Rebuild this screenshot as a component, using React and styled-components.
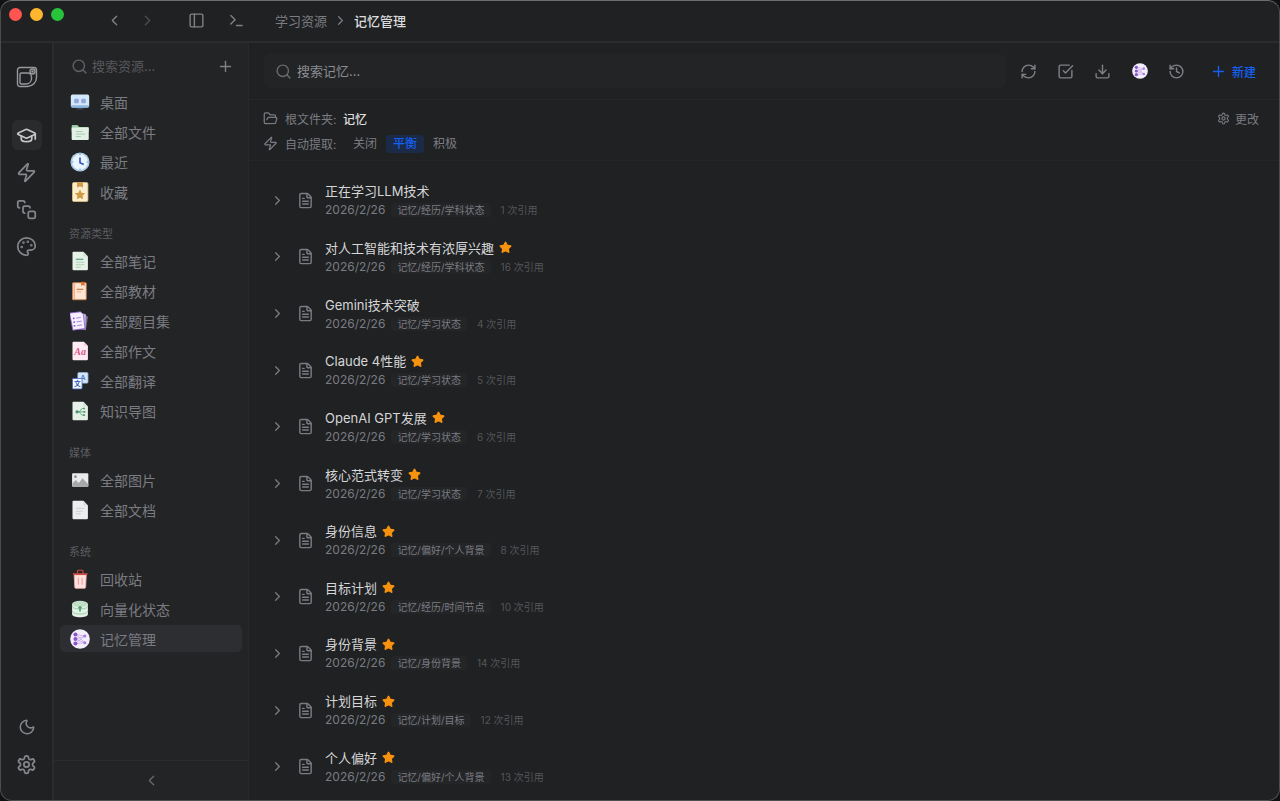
import React from 'react';
import styled, { createGlobalStyle, css } from 'styled-components';
import {
  ChevronLeft,
  ChevronRight,
  Download,
  FileText,
  FolderOpen,
  GraduationCap,
  History,
  Moon,
  Palette,
  PanelLeft,
  Plus,
  RefreshCw,
  Search,
  SquareCheckBig,
  SquareStack,
  Star,
  Terminal,
  Zap,
} from 'lucide-react';

const fileGroups = [
  {
    items: [
      { icon: 'desktop', label: '桌面' },
      { icon: 'folder', label: '全部文件' },
      { icon: 'clock', label: '最近' },
      { icon: 'favorite', label: '收藏' },
    ],
  },
  {
    title: '资源类型',
    items: [
      { icon: 'note', label: '全部笔记' },
      { icon: 'book', label: '全部教材' },
      { icon: 'exam', label: '全部题目集' },
      { icon: 'essay', label: '全部作文' },
      { icon: 'translate', label: '全部翻译' },
      { icon: 'mindmap', label: '知识导图' },
    ],
  },
  {
    title: '媒体',
    items: [
      { icon: 'image', label: '全部图片' },
      { icon: 'document', label: '全部文档' },
    ],
  },
  {
    title: '系统',
    items: [
      { icon: 'trash', label: '回收站' },
      { icon: 'vector', label: '向量化状态' },
      { icon: 'memory', label: '记忆管理', active: true },
    ],
  },
];

const memories = [
  { title: '正在学习LLM技术', path: '记忆/经历/学科状态', count: 1 },
  { title: '对人工智能和技术有浓厚兴趣', path: '记忆/经历/学科状态', count: 16, starred: true },
  { title: 'Gemini技术突破', path: '记忆/学习状态', count: 4 },
  { title: 'Claude 4性能', path: '记忆/学习状态', count: 5, starred: true },
  { title: 'OpenAI GPT发展', path: '记忆/学习状态', count: 6, starred: true },
  { title: '核心范式转变', path: '记忆/学习状态', count: 7, starred: true },
  { title: '身份信息', path: '记忆/偏好/个人背景', count: 8, starred: true },
  { title: '目标计划', path: '记忆/经历/时间节点', count: 10, starred: true },
  { title: '身份背景', path: '记忆/身份背景', count: 14, starred: true },
  { title: '计划目标', path: '记忆/计划/目标', count: 12, starred: true },
  { title: '个人偏好', path: '记忆/偏好/个人背景', count: 13, starred: true },
];

/* 24x24 drawings for the resource list */
const drawings = {
  desktop: (
    <>
      <path d="M8 19h8v2H8z" fill="#3b4450" />
      <rect x="1" y="3" width="22" height="15.5" rx="2" fill="#d3e7f8" />
      <path d="M1 16h22v.8a2 2 0 0 1-2 2H3a2 2 0 0 1-2-2z" fill="#8fb6dc" />
      <rect x="5" y="8" width="5.5" height="5.5" rx="1.2" fill="#8fa9dd" />
      <rect x="13.5" y="8" width="5.5" height="5.5" rx="1.2" fill="#8fa9dd" />
    </>
  ),
  folder: (
    <>
      <path d="M2 5a1.5 1.5 0 0 1 1.5-1.500H9L11 6h10.500A1 1 0 0 1 22.500 7v5H2z" fill="#9cc5a3" />
      <rect x="2" y="6.5" width="20.5" height="15" rx="1.2" fill="#e3f1e5" />
      <path d="M7 11.500h8M7 14.500h11M7 17.500h6" stroke="#a3cdb0" strokeWidth="1.2" />
    </>
  ),
  clock: (
    <>
      <circle cx="12" cy="12" r="11.5" fill="#a9cbe9" />
      <circle cx="12" cy="12" r="9.5" fill="#eaf4fd" />
      <path d="M12 2v2M12 20v2M2 12h2M20 12h2" stroke="#5a86c4" strokeWidth="1" />
      <path d="M12 6.500V13l4.500 2" fill="none" stroke="#2d55c8" strokeWidth="2" />
    </>
  ),
  favorite: (
    <>
      <rect x="3" y="0.5" width="18.5" height="23" rx="1.8" fill="#fbedcf" stroke="#e6c07c" />
      <path d="M8.500 0.500h7V7L12 5l-3.500 2z" fill="#d39a45" />
      <path d="m12 9 1.900 3.900 4.300.6-3.100 3 .7 4.300-3.800-2-3.800 2 .7-4.300-3.100-3 4.300-.6z" fill="#d39a45" />
    </>
  ),
  note: (
    <>
      <path d="M3 2a1 1 0 0 1 1-1h12l5.500 5.500V22a1 1 0 0 1-1 1H4a1 1 0 0 1-1-1z" fill="#e6f1e7" />
      <path d="M16 1v5.500h5.500z" fill="#cfe3d3" />
      <path d="M7 10h9" stroke="#70b18d" strokeWidth="1.8" />
      <path d="M7 13.500h10.500M7 16.500h10.500M7 19.500h6" stroke="#add2ba" strokeWidth="1.2" />
    </>
  ),
  book: (
    <>
      <rect x="3" y="2" width="16.5" height="20.5" rx="1" fill="#fce5d2" stroke="#cb7d49" />
      <path d="M5 2v20" stroke="#d98a58" strokeWidth="1" />
      <path d="M13.500 1h4v5l-2-1.300-2 1.300z" fill="#d86f2b" />
      <path d="M8 10h8" stroke="#c9794a" strokeWidth="1.4" />
      <path d="M8 13h5.500" stroke="#dfa989" strokeWidth="1" />
    </>
  ),
  exam: (
    <>
      <path d="m15 3 6.500 4-2.500 16-8-1z" fill="#7f7290" />
      <path d="m12 2 7 2-.5 18-8-.5z" fill="#c6b2e6" />
      <path d="m-.5 2.500 13-1.500L16 4l2 17-14.500 2z" fill="#f5effe" stroke="#8e61cf" />
      <path d="m3.500 9 2-.3M4 13.500l2-.3M4.500 18l2-.3" stroke="#8558c9" strokeWidth="2" />
      <path d="m7.500 8.500 5.500-.8M8 13l6-.8M8.500 17.500l6-.8" stroke="#a98bd8" strokeWidth="1.2" />
    </>
  ),
  essay: (
    <>
      <path d="M3 2a1 1 0 0 1 1-1h12.500L21.500 6v16a1 1 0 0 1-1 1H4a1 1 0 0 1-1-1z" fill="#fdebf1" />
      <path d="M16.500 1v5h5z" fill="#f6d3df" />
      <text
        x="12.2"
        y="17"
        textAnchor="middle"
        fontFamily="Liberation Serif, serif"
        fontSize="12"
        fontStyle="italic"
        fontWeight="700"
        fill="#d9578a"
      >
        Aa
      </text>
    </>
  ),
  translate: (
    <>
      <rect x="9.5" y="2" width="12" height="12.5" rx="1" fill="#d4e6fa" stroke="#a9c8ea" />
      <text x="15.5" y="11" textAnchor="middle" fontFamily="Liberation Sans, sans-serif" fontSize="9" fontWeight="700" fill="#4f7fc9">
        A
      </text>
      <rect x="3" y="9" width="11.5" height="12.5" rx="1" fill="#f5f8ff" stroke="#4168c4" />
      <text x="8.8" y="18.5" textAnchor="middle" fontFamily="Noto Sans CJK SC, sans-serif" fontSize="8" fontWeight="700" fill="#2c56b5">
        文
      </text>
    </>
  ),
  mindmap: (
    <>
      <path d="M3 2a1 1 0 0 1 1-1h12l5.500 5.500V22a1 1 0 0 1-1 1H4a1 1 0 0 1-1-1z" fill="#e6f1e7" />
      <path d="M16 1v5.500h5.500z" fill="#cfe3d3" />
      <path d="M8 13h9M16.500 9h-1.500c-2.500 0-2 4-4.500 4 2.500 0 2 4 4.500 4h1.500" fill="none" stroke="#5aa27a" strokeWidth="1" />
      <circle cx="8.5" cy="13" r="1.9" fill="#40936a" />
      <path d="M15.500 8h2.500v2h-2.500zM16 12h2.500v2H16zM15.500 16h2.500v2h-2.500z" fill="#5aa27a" />
    </>
  ),
  image: (
    <>
      <rect x="2.5" y="4" width="19.5" height="16" rx="1.2" fill="#ecebeb" />
      <circle cx="6.5" cy="8" r="1.6" fill="#8d8d8d" />
      <path d="M3 19v-3l4-4 3.500 3.500L15 10l7 7v2a1 1 0 0 1-1 1H4a1 1 0 0 1-1-1z" fill="#a8a8a8" />
    </>
  ),
  document: (
    <>
      <path d="M3 2a1 1 0 0 1 1-1h12l5.500 5.500V22a1 1 0 0 1-1 1H4a1 1 0 0 1-1-1z" fill="#efeeee" />
      <path d="M16 1v5.500h5.500z" fill="#dcdcdc" />
      <path d="M7 10h10.500M7 13.500h8M7 16.500h6" stroke="#cdcdcd" strokeWidth="1.1" />
    </>
  ),
  trash: (
    <>
      <path d="M9 5V2.500a1 1 0 0 1 1-1h4.500a1 1 0 0 1 1 1V5" fill="none" stroke="#cf4640" strokeWidth="1.4" />
      <path d="M5 7h14.500l-.7 15a1.300 1.300 0 0 1-1.300 1.200H7A1.300 1.300 0 0 1 5.700 22z" fill="#fde2df" stroke="#f0aaa5" />
      <path d="M3.500 6h17.500" stroke="#cf4640" strokeWidth="2" />
      <path d="M10 10.500v8.500M14.500 10.500v8.500" stroke="#eb9e98" strokeWidth="1.3" />
    </>
  ),
  vector: (
    <>
      <path d="M2.500 6v12c0 2.500 4.300 4 9.500 4s9.500-1.500 9.500-4V6z" fill="#e2f2e5" />
      <path d="M2.500 14c1 3 4 4 9.500 4s8.500-1 9.500-4M2.500 8.500c1 2.500 4 3.500 9.500 3.500s8.500-1 9.500-3.500" fill="none" stroke="#92c5a3" />
      <ellipse cx="12" cy="6" rx="9.5" ry="3.8" fill="#bfdfc7" />
      <path d="m12 8-3 3.200h2V15h2v-3.800h2z" fill="#52a072" />
    </>
  ),
  memory: (
    <>
      <circle cx="12" cy="12" r="11.8" fill="#f3edfc" />
      <path d="M6.500 6.500 17.500 8.500M6.500 6.500l11 9.500M6.500 12l11-3.500M6.500 12l11 4.500M6.500 17.500l11-9M6.500 17.500l11-1" stroke="#bd9fe6" strokeWidth=".8" />
      <circle cx="6.5" cy="6.5" r="2.4" fill="#8b57d0" />
      <circle cx="6.5" cy="12" r="2.4" fill="#8b57d0" />
      <circle cx="6.5" cy="17.5" r="2.4" fill="#8b57d0" />
      <circle cx="17.8" cy="8.3" r="1.8" fill="#a57be0" />
      <circle cx="17.8" cy="16.5" r="1.8" fill="#a57be0" />
    </>
  ),
};

const Drawing = ({ name, size = 20 }) => (
  <svg width={size} height={size} viewBox="0 0 24 24" aria-hidden="true">
    {drawings[name]}
  </svg>
);

const Logo = () => (
  <svg width="22" height="22" viewBox="0 0 22 22" fill="none" stroke="currentColor" strokeWidth="1.4" aria-hidden="true">
    <path d="M4 1.500h14a2.500 2.500 0 0 1 2.500 2.500v7.500a9 9 0 0 1-9 9H4A2.500 2.500 0 0 1 1.500 18V4A2.500 2.500 0 0 1 4 1.500z" />
    <path d="M5.500 7h6a4 4 0 0 1 4 4v2a5.500 5.500 0 0 1-5.500 5H5.500A1.500 1.500 0 0 1 4 16.500v-8A1.500 1.500 0 0 1 5.500 7z" />
    <circle cx="16.5" cy="5.5" r="2.5" />
    <circle cx="16.5" cy="5.5" r=".6" />
  </svg>
);

const Gear = ({ size }) => (
  <svg
    width={size}
    height={size}
    viewBox="0 0 24 24"
    fill="none"
    stroke="currentColor"
    strokeWidth="2"
    strokeLinecap="round"
    strokeLinejoin="round"
    aria-hidden="true"
  >
    <path d="M12.22 2h-.44a2 2 0 0 0-2 2v.18a2 2 0 0 1-1 1.73l-.43.25a2 2 0 0 1-2 0l-.15-.08a2 2 0 0 0-2.73.73l-.22.38a2 2 0 0 0 .73 2.73l.15.1a2 2 0 0 1 1 1.72v.51a2 2 0 0 1-1 1.74l-.15.09a2 2 0 0 0-.73 2.73l.22.38a2 2 0 0 0 2.73.73l.15-.08a2 2 0 0 1 2 0l.43.25a2 2 0 0 1 1 1.73V20a2 2 0 0 0 2 2h.44a2 2 0 0 0 2-2v-.18a2 2 0 0 1 1-1.73l.43-.25a2 2 0 0 1 2 0l.15.08a2 2 0 0 0 2.73-.73l.22-.39a2 2 0 0 0-.73-2.73l-.15-.08a2 2 0 0 1-1-1.74v-.5a2 2 0 0 1 1-1.74l.15-.09a2 2 0 0 0 .73-2.73l-.22-.38a2 2 0 0 0-2.73-.73l-.15.08a2 2 0 0 1-2 0l-.43-.25a2 2 0 0 1-1-1.73V4a2 2 0 0 0-2-2z" />
    <circle cx="12" cy="12" r="3" />
  </svg>
);

export default function App() {
  return (
    <>
      <GlobalStyle />
      <Window>
        <TitleBar>
          <TrafficLights>
            <Light color="#ff5550" />
            <Light color="#ffb52e" />
            <Light color="#27c43b" />
          </TrafficLights>
          <TitleTools>
            <IconButton aria-label="后退">
              <ChevronLeft size={17} />
            </IconButton>
            <IconButton aria-label="前进" $dim>
              <ChevronRight size={17} />
            </IconButton>
            <IconButton aria-label="侧边栏" $spaced>
              <PanelLeft size={17} />
            </IconButton>
            <IconButton aria-label="终端">
              <Terminal size={17} />
            </IconButton>
          </TitleTools>
          <Breadcrumb>
            <a href="#resources">学习资源</a>
            <ChevronRight size={15} />
            <strong>记忆管理</strong>
          </Breadcrumb>
        </TitleBar>

        <Body>
          <Rail>
            <LogoBox>
              <Logo />
            </LogoBox>
            <RailButton aria-label="学习资源" $active>
              <GraduationCap size={21} />
            </RailButton>
            <RailButton aria-label="快捷">
              <Zap size={21} />
            </RailButton>
            <RailButton aria-label="模板">
              <SquareStack size={21} />
            </RailButton>
            <RailButton aria-label="主题">
              <Palette size={21} />
            </RailButton>
            <RailBottom>
              <RailButton aria-label="深色模式">
                <Moon size={18} />
              </RailButton>
              <RailButton aria-label="设置">
                <Gear size={21} />
              </RailButton>
            </RailBottom>
          </Rail>

          <Sidebar>
            <SidebarSearch>
              <Search size={17} />
              <SidebarInput type="search" aria-label="搜索资源" placeholder="搜索资源..." />
              <IconButton aria-label="添加">
                <Plus size={17} />
              </IconButton>
            </SidebarSearch>
            <Groups>
              {fileGroups.map((group, i) => (
                <Group key={i}>
                  {group.title && <GroupTitle>{group.title}</GroupTitle>}
                  {group.items.map(({ icon, label, active }) => (
                    <SidebarItem key={label} $active={active}>
                      <Drawing name={icon} />
                      {label}
                    </SidebarItem>
                  ))}
                </Group>
              ))}
            </Groups>
            <Collapse aria-label="收起">
              <ChevronLeft size={17} />
            </Collapse>
          </Sidebar>

          <Main>
            <Toolbar>
              <SearchBox>
                <Search size={17} />
                <SearchInput type="search" aria-label="搜索记忆" placeholder="搜索记忆..." />
              </SearchBox>
              <Actions>
                <IconButton aria-label="刷新">
                  <RefreshCw size={17} />
                </IconButton>
                <IconButton aria-label="多选">
                  <SquareCheckBig size={17} />
                </IconButton>
                <IconButton aria-label="导出">
                  <Download size={17} />
                </IconButton>
                <IconButton aria-label="记忆">
                  <Drawing name="memory" size={16} />
                </IconButton>
                <IconButton aria-label="历史">
                  <History size={17} />
                </IconButton>
              </Actions>
              <CreateButton>
                <Plus size={17} />
                新建
              </CreateButton>
            </Toolbar>

            <Options>
              <OptionRow>
                <FolderOpen size={15} />
                <OptionLabel>根文件夹:</OptionLabel>
                <strong>记忆</strong>
                <ChangeButton>
                  <Gear size={13} />
                  更改
                </ChangeButton>
              </OptionRow>
              <OptionRow>
                <Zap size={15} />
                <OptionLabel>自动提取:</OptionLabel>
                <Modes>
                  <ModeButton>关闭</ModeButton>
                  <ModeButton $active>平衡</ModeButton>
                  <ModeButton>积极</ModeButton>
                </Modes>
              </OptionRow>
            </Options>

            <List>
              {memories.map((memory) => (
                <MemoryRow key={memory.title}>
                  <ExpandButton aria-label="展开">
                    <ChevronRight size={15} />
                  </ExpandButton>
                  <FileText size={17} />
                  <MemoryText>
                    <MemoryTitle>
                      {memory.title}
                      {memory.starred && <Star size={13} fill="currentColor" />}
                    </MemoryTitle>
                    <MemoryMeta>
                      <span>2026/2/26</span>
                      <Tag>{memory.path}</Tag>
                      <Count>{memory.count} 次引用</Count>
                    </MemoryMeta>
                  </MemoryText>
                </MemoryRow>
              ))}
            </List>
          </Main>
        </Body>
      </Window>
    </>
  );
}

const GlobalStyle = createGlobalStyle`
  * {
    box-sizing: border-box;
  }

  body {
    margin: 0;
    background: #101112;
    color: #7b7c83;
    font-family: Inter, 'Noto Sans CJK SC', sans-serif;
    font-size: 12px;
  }

  button, input {
    padding: 0;
    border: 0;
    background: none;
    color: inherit;
    font: inherit;
  }

  svg {
    flex: none;
  }
`;

const Window = styled.div`
  display: flex;
  flex-direction: column;
  height: 100vh;
  overflow: hidden;
  border: 1px solid #4b4d4e;
  border-top-color: #6b6d6e;
  border-radius: 12px;
  background: #1f2122;
`;

const TitleBar = styled.header`
  display: flex;
  flex: none;
  height: 42px;
  padding-bottom: 2px;
  border-bottom: 2px solid #2b2c2e;
`;

const TrafficLights = styled.div`
  display: flex;
  gap: 8px;
  width: 99px;
  padding: 7px 0 0 8px;
`;

const Light = styled.span`
  width: 13px;
  height: 13px;
  border-radius: 50%;
  background: ${(props) => props.color};
`;

const IconButton = styled.button`
  display: flex;
  align-items: center;
  justify-content: center;
  width: 28px;
  height: 28px;
  margin-left: ${(props) => (props.$spaced ? '16px' : '0')};
  color: ${(props) => (props.$dim ? '#4c4d50' : '#7f8085')};
`;

const TitleTools = styled.div`
  display: flex;
  align-items: center;
  gap: 5px;

  button + button + button {
    margin-right: 7px;
  }
`;

const Breadcrumb = styled.nav`
  display: flex;
  align-items: center;
  gap: 6px;
  margin-left: 18px;
  font-size: 13px;

  a {
    color: #7b7c83;
    text-decoration: none;
  }

  strong {
    color: #dddddf;
    font-weight: 500;
  }
`;

const Body = styled.div`
  display: flex;
  flex: 1;
  min-height: 0;
`;

const Rail = styled.nav`
  display: flex;
  flex-direction: column;
  align-items: center;
  gap: 7px;
  width: 53px;
  padding: 18px 0 21px;
  border-right: 2px solid #2b2c2e;
`;

const LogoBox = styled.div`
  display: flex;
  align-items: center;
  height: 32px;
  margin-bottom: 20px;
  color: #97989c;
`;

const RailButton = styled.button`
  display: flex;
  align-items: center;
  justify-content: center;
  width: 30px;
  height: 30px;
  border-radius: 6px;
  color: #85868c;

  ${(props) =>
    props.$active &&
    css`
      background: #2a2b2d;
      color: #c6c6c8;
    `}
`;

const RailBottom = styled.div`
  display: flex;
  flex-direction: column;
  gap: 7px;
  margin-top: auto;
`;

const Sidebar = styled.aside`
  display: flex;
  flex-direction: column;
  width: 195px;
  border-right: 1px solid #28292b;
  background: #232425;
`;

const SidebarSearch = styled.div`
  display: flex;
  align-items: center;
  gap: 4px;
  height: 45px;
  padding: 1px 9px 0 17px;
  color: #606167;
`;

const SidebarInput = styled.input`
  flex: 1;
  min-width: 0;
  font-size: 13px;
  outline: none;

  &::placeholder {
    color: #57585d;
  }
`;

const Groups = styled.div`
  flex: 1;
  padding: 0 6px;
`;

const Group = styled.div`
  display: flex;
  flex-direction: column;
  gap: 3px;
  margin-bottom: 20px;
`;

const GroupTitle = styled.h2`
  margin: 0;
  padding: 0 9px;
  color: #5c5d62;
  font-size: 11px;
  font-weight: 400;
  line-height: 19px;
`;

const SidebarItem = styled.button`
  display: flex;
  align-items: center;
  gap: 10px;
  height: 27px;
  padding: 0 10px;
  border-radius: 5px;
  background: ${(props) => (props.$active ? '#2d2e31' : 'transparent')};
  font-size: 14px;
`;

const Collapse = styled.button`
  display: flex;
  align-items: center;
  justify-content: center;
  height: 40px;
  border-top: 1px solid #2b2c2e;
  color: #67686c;
`;

const Main = styled.main`
  display: flex;
  flex: 1;
  flex-direction: column;
  min-width: 0;
`;

const Toolbar = styled.div`
  display: flex;
  align-items: center;
  height: 57px;
  padding: 0 23px 0 15px;
  border-bottom: 1px solid #252628;
`;

const SearchBox = styled.div`
  display: flex;
  flex: 1;
  align-items: center;
  gap: 5px;
  height: 34px;
  padding: 0 11px;
  border-radius: 6px;
  background: #232425;
  color: #68696d;
`;

const SearchInput = styled.input`
  flex: 1;
  min-width: 0;
  font-size: 13px;
  outline: none;

  &::placeholder {
    color: #8a8d94;
  }
`;

const Actions = styled.div`
  display: flex;
  gap: 9px;
  margin: 0 19px 0 9px;
`;

const CreateButton = styled.button`
  display: flex;
  align-items: center;
  gap: 5px;
  color: #1560f0;
  font-weight: 500;
`;

const Options = styled.section`
  display: flex;
  flex-direction: column;
  gap: 6px;
  padding: 9px 20px 7px 14px;
  border-bottom: 1px solid #252628;
`;

const OptionRow = styled.div`
  display: flex;
  align-items: center;
  height: 19px;

  strong {
    color: #dddddf;
    font-weight: 500;
  }
`;

const OptionLabel = styled.span`
  width: 50px;
  margin: 0 8px 0 7px;
  white-space: nowrap;
`;

const ChangeButton = styled.button`
  display: flex;
  align-items: center;
  gap: 5px;
  margin-left: auto;
`;

const Modes = styled.div`
  display: flex;
  gap: 2px;
  margin-left: 3px;
`;

const ModeButton = styled.button`
  height: 18px;
  padding: 0 7px;
  border-radius: 3px;
  line-height: 18px;

  ${(props) =>
    props.$active &&
    css`
      background: #1b2a47;
      color: #1560f0;
      font-weight: 500;
    `}
`;

const List = styled.div`
  display: flex;
  flex: 1;
  flex-direction: column;
  min-height: 0;
  padding: 11px 15px 5px;
`;

const MemoryRow = styled.article`
  display: flex;
  flex: 1;
  align-items: center;
  padding: 0 6px;
`;

const ExpandButton = styled.button`
  display: flex;
  margin-right: 12px;
`;

const MemoryText = styled.div`
  margin-left: 11px;
`;

const MemoryTitle = styled.h3`
  display: flex;
  align-items: center;
  gap: 5px;
  margin: 0;
  color: #d6d6d8;
  font-size: 13px;
  font-weight: 400;
  line-height: 20px;

  svg {
    color: #f7930f;
  }
`;

const MemoryMeta = styled.div`
  display: flex;
  align-items: center;
  line-height: 18px;
`;

const Tag = styled.span`
  margin: 0 10px 0 6px;
  padding: 0 6px;
  border-radius: 3px;
  background: #242527;
  font-size: 10px;
  line-height: 14px;
`;

const Count = styled.span`
  color: #55565a;
  font-size: 10px;
`;
